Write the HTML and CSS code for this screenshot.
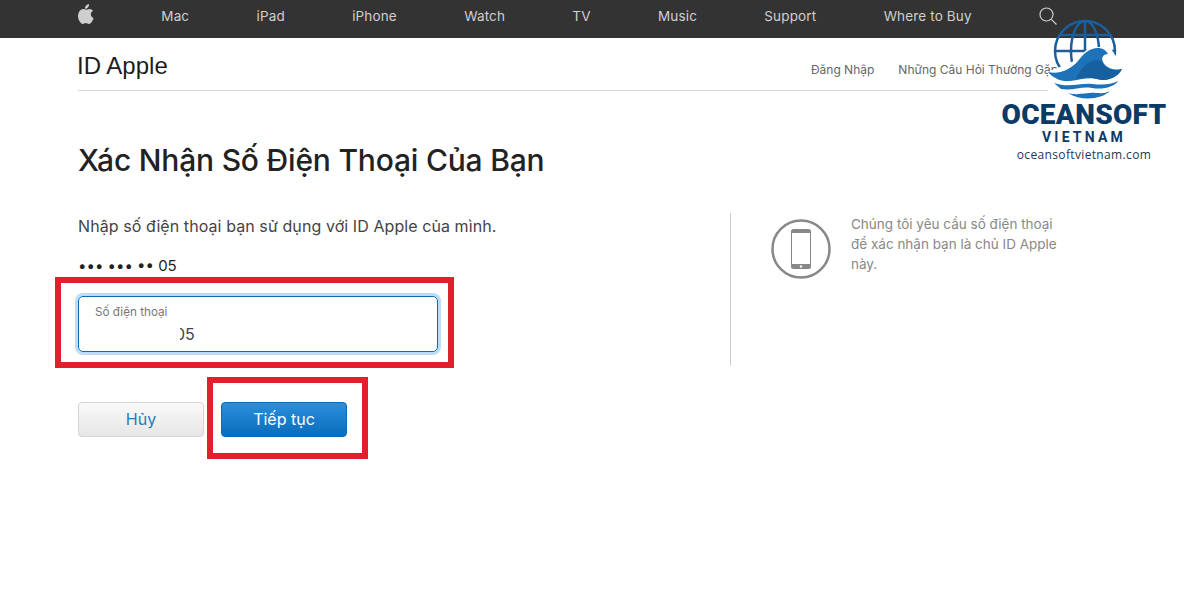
FILE: index.html
```html
<!DOCTYPE html>
<html lang="vi">
<head>
    <meta charset="UTF-8">
    <title>ID Apple</title>
    <link rel="stylesheet" href="styles.css">
</head>
<body>

    <!-- Global nav -->
    <nav class="global-nav">
        <svg class="apple-icon" viewBox="0 0 16 20" width="16" height="20"><path d="M11 0c.1 1.300-.3 2.500-1 3.400-.8.900-1.800 1.500-3 1.400-.1-1.200.4-2.400 1.100-3.200C8.900.700 10 .100 11 0zM8.100 5.700c.7 0 1.800-.9 3.300-.8 1.500.1 2.800.7 3.600 1.900-1.400.9-2.200 2-2.100 3.700.1 1.800 1.100 3 2.700 3.700-.4 1.100-.9 2.200-1.600 3.200-.9 1.300-1.800 2.500-3.100 2.500-1.300 0-1.700-.8-3.100-.8-1.400 0-1.900.8-3.100.8-1.300 0-2.300-1.300-3.200-2.600C.2 15-.4 12.400.3 9.900c.6-2.400 2.500-4.600 4.700-4.800 1.300-.1 2.400.6 3.100.6z"/></svg>
        <a href="#">Mac</a>
        <a href="#">iPad</a>
        <a href="#">iPhone</a>
        <a href="#">Watch</a>
        <a href="#">TV</a>
        <a href="#">Music</a>
        <a href="#">Support</a>
        <a href="#">Where to Buy</a>
        <svg class="search-icon" viewBox="0 0 18 18" width="18" height="18"><circle cx="7.500" cy="7.500" r="6.500"/><path d="M12.300 12.300L17.500 17.500"/></svg>
    </nav>

    <div class="page">
        <header class="page-header">
            <div class="brand">ID Apple</div>
            <div class="header-links">
                <a href="#">Đăng Nhập</a>
                <a href="#">Những Câu Hỏi Thường Gặp</a>
            </div>
        </header>

        <h1 class="page-title">Xác Nhận Số Điện Thoại Của Bạn</h1>

        <div class="columns">
            <section class="form-column">
                <p class="intro">Nhập số điện thoại bạn sử dụng với ID Apple của mình.</p>
                <p class="masked">••• ••• •• 05</p>
                <div class="field">
                    <span class="field-label">Số điện thoại</span>
                    <span class="field-value">05</span>
                </div>
                <div class="actions">
                    <button class="btn btn-cancel">Hủy</button>
                    <button class="btn btn-next">Tiếp tục</button>
                </div>
            </section>

            <aside class="side-note">
                <svg class="phone-icon" viewBox="0 0 60 60" width="60" height="60">
                    <circle class="ring" cx="30" cy="30" r="28.500"/>
                    <rect class="body" x="20" y="10" width="20" height="40" rx="2.500"/>
                    <rect class="screen" x="21" y="14" width="18" height="31"/>
                    <circle class="screen" cx="30" cy="47.500" r="1.200"/>
                </svg>
                <p>Chúng tôi yêu cầu số điện thoại để xác nhận bạn là chủ ID Apple này.</p>
            </aside>
        </div>
    </div>

    <!-- Red annotation boxes -->
    <div class="mark mark-field"></div>
    <div class="mark mark-button"></div>

    <!-- Watermark -->
    <div class="watermark">
        <svg class="wm-logo" viewBox="0 0 90 85" width="90" height="85">
            <g class="globe">
                <circle cx="45" cy="36" r="30"/>
                <ellipse cx="45" cy="36" rx="14" ry="30"/>
                <path d="M45 6V66M15 36H75M20 20H70"/>
            </g>
            <path class="wave-mask" d="M8 57L34 46L50 32H70L84 54V85H8Z"/>
            <path class="wave-light" d="M8 57C20 60 31 54 38 46C44 38 50 33 58 33C62 33 66 35 68 39C63 39 61 43 63 47C66 53 74 56 82 54C78 62 68 67 57 64C48 62 40 65 30 66C21 67 13 63 8 57Z"/>
            <path class="wave-dark" d="M36 64C40 54 48 46 56 45C58 45 60 45 62 46C64 53 73 57 82 54C78 62 68 67 57 64C50 62 43 63 36 64Z"/>
            <path class="wave-light" d="M14 68C28 73 40 68 52 69C62 70 70 70 78 66C74 72 63 75 52 73C41 71 33 76 21 74Z"/>
            <path class="wave-light" d="M28 78C38 81 47 77 56 78C60 78 65 79 70 76C62 84 42 87 28 78Z"/>
        </svg>
        <div class="wm-name">OCEANSOFT</div>
        <div class="wm-sub">VIETNAM</div>
        <div class="wm-url">oceansoftvietnam.com</div>
    </div>

</body>
</html>
```

FILE: styles.css
```css
/* Global styling */
body {
    margin: 0;
    background-color: #fff;
    font-family: "Inter", "Liberation Sans", sans-serif;
    color: #333;
    height: 608px;
    overflow: hidden;
}

a {
    color: inherit;
    text-decoration: none;
}

/* Top nav bar */
.global-nav {
    height: 38px;
    background-color: #333;
    display: flex;
    align-items: center;
    justify-content: space-between;
    padding: 0 127px 0 78px;
    font-size: 13.500px;
    letter-spacing: 0.150px;
    color: #cfcfcf;
}

.global-nav a {
    position: relative;
    top: -3px;
}

.apple-icon {
    fill: #cfcfcf;
    position: relative;
    top: -5px;
}

.search-icon {
    fill: none;
    stroke: #cfcfcf;
    stroke-width: 1.200;
    position: relative;
    top: -3px;
}

/* Page content */
.page {
    padding: 0 78px;
}

.page-header {
    height: 52px;
    border-bottom: 1px solid #d6d6d6;
    display: flex;
    align-items: center;
    justify-content: space-between;
}

.brand {
    font-family: "Liberation Sans", sans-serif;
    font-size: 24px;
    color: #1d1d1f;
    position: relative;
    top: 2px;
    left: -1px;
}

.header-links {
    display: flex;
    gap: 24px;
    font-size: 12px;
    color: #666;
    padding: 10px 48px 0 0;
}

.page-title {
    margin: 50px 0 0;
    font-size: 30px;
    line-height: 38px;
    font-weight: 500;
    color: #222;
    letter-spacing: -0.200px;
}

.columns {
    display: flex;
    margin-top: 34px;
}

.form-column {
    width: 652px;
    height: 153px;
    border-right: 1px solid #ccc;
}

.intro {
    margin: 3px 0 0;
    font-size: 16px;
    line-height: 20px;
    letter-spacing: 0.080px;
    color: #444;
}

.masked {
    margin: 20px 0 0;
    font-size: 15px;
    line-height: 20px;
    color: #222;
}

/* Phone number field */
.field {
    width: 358px;
    height: 54px;
    margin-top: 20px;
    border: 1px solid #0a6ab5;
    border-radius: 5px;
    box-shadow: 0 0 0 3px #bcdcf7;
    position: relative;
}

.field-label {
    position: absolute;
    left: 16px;
    top: 8px;
    font-size: 11.700px;
    color: #777;
}

.field-value {
    position: absolute;
    left: 96px;
    top: 27px;
    font-size: 16px;
    color: #444;
}

.field-value::before {
    content: "";
    position: absolute;
    left: 0;
    top: 0;
    width: 5px;
    height: 100%;
    background-color: #fff;
}

/* Buttons */
.actions {
    display: flex;
    gap: 17px;
    margin-top: 50px;
}

.btn {
    width: 126px;
    height: 35px;
    border-radius: 4px;
    font-family: inherit;
    font-size: 16px;
    padding: 0 0 2px;
}

.btn-cancel {
    color: #2a7ab8;
    border: 1px solid #d4d4d4;
    background: linear-gradient(#fafafa, #e6e6e6);
}

.btn-next {
    color: #fff;
    border: 1px solid #0a6ab5;
    background: linear-gradient(#2b8fdc, #0a6cbc);
}

/* Right hand note */
.side-note {
    display: flex;
    gap: 20px;
    padding: 6px 0 0 40px;
    font-size: 13.500px;
    line-height: 20px;
    color: #888;
}

.side-note p {
    margin: -5px 0 0;
    width: 215px;
}

.ring {
    fill: none;
    stroke: #888;
    stroke-width: 2.500;
}

.phone-icon .body {
    fill: #888;
}

.phone-icon .screen {
    fill: #fff;
}

/* Red annotation boxes */
.mark {
    position: absolute;
    border: 6px solid #e0202c;
    box-sizing: border-box;
}

.mark-field {
    left: 55px;
    top: 277px;
    width: 399px;
    height: 91px;
}

.mark-button {
    left: 207px;
    top: 377px;
    width: 161px;
    height: 82px;
}

/* Watermark logo */
.watermark {
    position: absolute;
    left: 1000px;
    top: 15px;
    width: 168px;
    text-align: center;
    color: #0b3a66;
    font-family: "Open Sans", sans-serif;
}

.wm-logo {
    display: block;
    margin-left: 40px;
}

.globe {
    fill: none;
    stroke: #1b5e9b;
    stroke-width: 2.500;
}

.wave-mask {
    fill: #fff;
}

.wave-light {
    fill: #1e72b8;
}

.wave-dark {
    fill: #17609f;
}

.wm-name {
    font-family: "Roboto", sans-serif;
    font-weight: 900;
    font-size: 28px;
    line-height: 30px;
    letter-spacing: 0.300px;
}

.wm-sub {
    font-family: "Roboto", sans-serif;
    font-weight: 700;
    font-size: 14px;
    line-height: 14px;
    letter-spacing: 3.200px;
}

.wm-url {
    font-size: 12px;
    line-height: 18px;
    letter-spacing: 0.350px;
    margin-top: 2px;
    color: #1c3a58;
}
```
